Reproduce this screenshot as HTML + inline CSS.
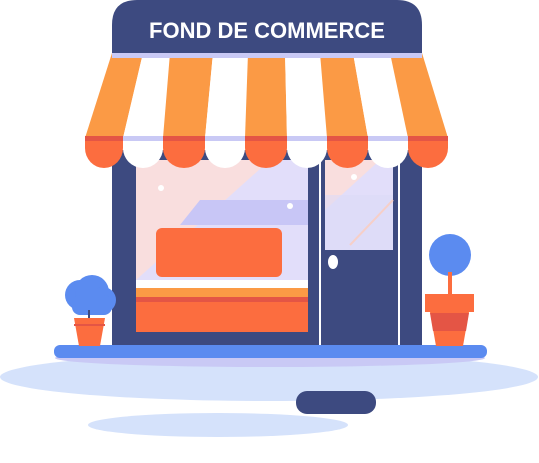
<!DOCTYPE html>
<html><head><style>html,body{margin:0;padding:0;background:#fff}svg{display:block}</style></head>
<body>
<svg width="539" height="463" viewBox="0 0 539 463" xmlns="http://www.w3.org/2000/svg">
<ellipse cx="269" cy="377" rx="269" ry="24" fill="#d5e2fb"/>
<ellipse cx="270" cy="358" rx="215" ry="9" fill="#c9c9f5"/>
<ellipse cx="218" cy="425" rx="130" ry="12" fill="#d5e2fb"/>
<rect x="296" y="391" width="80" height="23" rx="11" fill="#3d4a80"/>
<rect x="112" y="150" width="310" height="196" fill="#3d4a80"/>
<rect x="136" y="160" width="172" height="172" fill="#f9dede"/>
<polygon points="136,280 270,160 308,160 308,280" fill="#e2defa"/>
<polygon points="200,200 308,200 308,225 180,225" fill="#c8c6f6"/>
<rect x="156" y="228" width="126" height="49" rx="6" fill="#fc6d3f"/>
<rect x="136" y="280" width="172" height="8" fill="#fff"/>
<rect x="136" y="288" width="172" height="9" fill="#fb9a45"/>
<rect x="136" y="297" width="172" height="5" fill="#e45545"/>
<rect x="136" y="302" width="172" height="30" fill="#fc6d3f"/>
<rect x="319" y="160" width="2" height="186" fill="#fff"/>
<rect x="398" y="160" width="2" height="186" fill="#fff"/>
<rect x="325" y="160" width="68" height="90" fill="#e2defa"/>
<polygon points="325,160 380,160 325,210" fill="#f9dede"/>
<polygon points="325,195 393,195 393,250 325,250" fill="#dcdaf6" opacity=".6"/>
<line x1="350" y1="245" x2="393" y2="200" stroke="#f6cfc8" stroke-width="2"/>
<ellipse cx="333" cy="262" rx="5" ry="7" fill="#fff"/>
<circle cx="161" cy="188" r="3" fill="#fff"/><circle cx="354" cy="177" r="3" fill="#fff"/><circle cx="290" cy="206" r="3" fill="#fff"/>
<rect x="54" y="345" width="433" height="13" rx="6" fill="#5b8bf0"/>
<circle cx="80" cy="295" r="15" fill="#5b8bf0"/><circle cx="92" cy="292" r="17" fill="#5b8bf0"/><circle cx="103" cy="300" r="13" fill="#5b8bf0"/><rect x="72" y="295" width="40" height="20" rx="8" fill="#5b8bf0"/>
<rect x="88" y="310" width="2" height="10" fill="#3d4a80"/>
<polygon points="74,318 105,318 100,346 79,346" fill="#fc6d3f"/><rect x="74" y="324" width="31" height="2" fill="#e45545"/>
<circle cx="450" cy="255" r="21" fill="#5b8bf0"/>
<rect x="448" y="272" width="4" height="26" fill="#fc6d3f"/>
<rect x="425" y="294" width="49" height="18" fill="#fc6d3f"/>
<polygon points="430,312 469,312 463,346 436,346" fill="#fc6d3f"/>
<polygon points="430,313 469,313 466,331 433,331" fill="#e45545"/>
<g>
<polygon points="112,53 143,53 123,138 85,138" fill="#fb9a45"/>
<polygon points="143,53 170,53 163,138 123,138" fill="#fff"/>
<polygon points="170,53 213,53 205,138 163,138" fill="#fb9a45"/>
<polygon points="213,53 248,53 245,138 205,138" fill="#fff"/>
<polygon points="248,53 285,53 287,138 245,138" fill="#fb9a45"/>
<polygon points="285,53 320,53 327,138 287,138" fill="#fff"/>
<polygon points="320,53 353,53 368,138 327,138" fill="#fb9a45"/>
<polygon points="353,53 390,53 408,138 368,138" fill="#fff"/>
<polygon points="390,53 422,53 448,138 408,138" fill="#fb9a45"/>
</g>
<rect x="112" y="53" width="310" height="5" fill="#c9c9f5"/>
<g>
<path d="M85,137 H123 V148 A19,20 0 0 1 85,148 Z" fill="#fc6d3f"/>
<path d="M123,137 H163 V148 A20,20 0 0 1 123,148 Z" fill="#fff"/>
<path d="M163,137 H205 V148 A21,20 0 0 1 163,148 Z" fill="#fc6d3f"/>
<path d="M205,137 H245 V148 A20,20 0 0 1 205,148 Z" fill="#fff"/>
<path d="M245,137 H287 V148 A21,20 0 0 1 245,148 Z" fill="#fc6d3f"/>
<path d="M287,137 H327 V148 A20,20 0 0 1 287,148 Z" fill="#fff"/>
<path d="M327,137 H368 V148 A20.5,20 0 0 1 327,148 Z" fill="#fc6d3f"/>
<path d="M368,137 H408 V148 A20,20 0 0 1 368,148 Z" fill="#fff"/>
<path d="M408,137 H448 V148 A20,20 0 0 1 408,148 Z" fill="#fc6d3f"/>
</g>
<rect x="85" y="136" width="363" height="5" fill="#c9c9f5"/>
<rect x="85" y="136" width="38" height="5" fill="#e45545"/><rect x="163" y="136" width="42" height="5" fill="#e45545"/><rect x="245" y="136" width="42" height="5" fill="#e45545"/><rect x="327" y="136" width="41" height="5" fill="#e45545"/><rect x="408" y="136" width="40" height="5" fill="#e45545"/>
<path d="M112,53 V25 Q112,0 137,0 H397 Q422,0 422,25 V53 Z" fill="#3d4a80"/>
<text x="267" y="38" text-anchor="middle" font-family="Liberation Sans, sans-serif" font-weight="bold" font-size="22" fill="#fff">FOND DE COMMERCE</text>
</svg>
</body></html>
